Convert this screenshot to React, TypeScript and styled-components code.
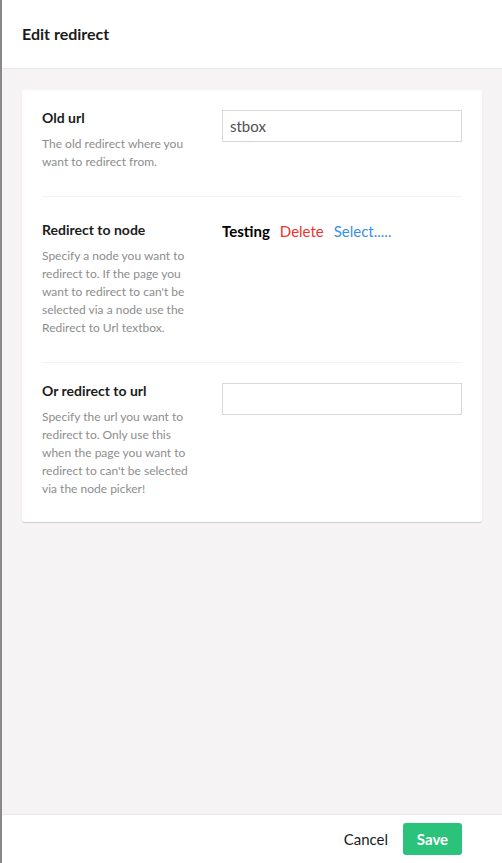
import React from "react";
import styled, { createGlobalStyle } from "styled-components";

const GlobalStyle = createGlobalStyle`
  html, body { margin: 0; padding: 0; height: 100%; }
  body { font-family: Lato, "Open Sans", sans-serif; background: #ffffff; }
  #root { height: 100%; }
  * { box-sizing: border-box; }
`;

const Shell = styled.div`
  display: flex;
  height: 863px;
  width: 502px;
`;

const BackdropStrip = styled.div`
  width: 2px;
  flex: none;
  background: #8a8989;
`;

const Panel = styled.div`
  flex: 1;
  display: flex;
  flex-direction: column;
  min-width: 0;
  background: #f5f3f3;
`;

const Header = styled.header`
  height: 69px;
  flex: none;
  display: flex;
  align-items: center;
  padding: 0 20px 1px;
  background: #ffffff;
  border-bottom: 1px solid #e9e9eb;
`;

const Title = styled.h1`
  margin: 0;
  font-size: 16px;
  font-weight: 700;
  color: #1b1b1b;
`;

const Body = styled.main`
  flex: 1;
  padding: 21px 20px;
`;

const Card = styled.section`
  background: #ffffff;
  border-radius: 3px;
  box-shadow: 0 1px 1px rgba(0, 0, 0, 0.16);
  padding: 0 20px;
`;

const Row = styled.div<{ $last?: boolean }>`
  display: flex;
  padding: 20px 0 ${(p) => (p.$last ? "24px" : "25px")};
  border-bottom: ${(p) => (p.$last ? "none" : "1px solid #f3f3f5")};
`;

const LabelCol = styled.div<{ $offset?: number }>`
  width: 160px;
  flex: none;
  margin-right: 20px;
  padding-top: ${(p) => p.$offset ?? 0}px;
`;

const Label = styled.div`
  font-size: 14px;
  font-weight: 700;
  line-height: 16px;
  color: #1b1b1b;
`;

const Description = styled.div`
  margin-top: 9px;
  font-size: 12px;
  line-height: 18px;
  color: #8d8d8d;
`;

const Controls = styled.div`
  flex: 1;
  min-width: 0;
`;

const TextInput = styled.input`
  display: block;
  width: 100%;
  height: 32px;
  padding: 0 7px;
  border: 1px solid #d8d7d9;
  border-radius: 0;
  font-family: Lato, "Open Sans", sans-serif;
  font-size: 15px;
  color: #515054;
  background: #ffffff;
  outline: none;
`;

const NodePicker = styled.div`
  display: flex;
  align-items: center;
  gap: 10px;
  margin-top: 5px;
  font-size: 15px;
  line-height: 18px;
`;

const NodeName = styled.span`
  font-weight: 700;
  color: #000000;
`;

const LinkAction = styled.span<{ $tone: "danger" | "info" }>`
  color: ${(p) => (p.$tone === "danger" ? "#f2312b" : "#3a8eeb")};
  cursor: pointer;
`;

const Footer = styled.footer`
  height: 49px;
  flex: none;
  display: flex;
  align-items: center;
  justify-content: flex-end;
  gap: 15px;
  padding: 0 40px 0 20px;
  background: #ffffff;
  border-top: 1px solid #e9e9eb;
`;

const CancelButton = styled.button`
  border: none;
  background: none;
  padding: 0;
  font-family: Lato, "Open Sans", sans-serif;
  font-size: 15px;
  color: #1b1b1b;
  cursor: pointer;
`;

const SaveButton = styled.button`
  height: 32px;
  width: 59px;
  border: none;
  border-radius: 3px;
  background: #2bc37c;
  color: #ffffff;
  font-family: Lato, "Open Sans", sans-serif;
  font-size: 15px;
  font-weight: 700;
  cursor: pointer;
`;

export default function App() {
  return (
    <>
      <GlobalStyle />
      <Shell>
        <BackdropStrip />
        <Panel>
          <Header>
            <Title>Edit redirect</Title>
          </Header>
          <Body>
            <Card>
              <Row>
                <LabelCol>
                  <Label>Old url</Label>
                  <Description>The old redirect where you want to redirect from.</Description>
                </LabelCol>
                <Controls>
                  <TextInput defaultValue="stbox" />
                </Controls>
              </Row>
              <Row>
                <LabelCol $offset={5}>
                  <Label>Redirect to node</Label>
                  <Description>
                    Specify a node you want to redirect to. If the page you want to redirect to can't be
                    selected via a node use the Redirect to Url textbox.
                  </Description>
                </LabelCol>
                <Controls>
                  <NodePicker>
                    <NodeName>Testing</NodeName>
                    <LinkAction $tone="danger">Delete</LinkAction>
                    <LinkAction $tone="info">Select.....</LinkAction>
                  </NodePicker>
                </Controls>
              </Row>
              <Row $last>
                <LabelCol>
                  <Label>Or redirect to url</Label>
                  <Description>
                    Specify the url you want to redirect to. Only use this when the page you want to
                    redirect to can't be selected via the node picker!
                  </Description>
                </LabelCol>
                <Controls>
                  <TextInput defaultValue="" />
                </Controls>
              </Row>
            </Card>
          </Body>
          <Footer>
            <CancelButton>Cancel</CancelButton>
            <SaveButton>Save</SaveButton>
          </Footer>
        </Panel>
      </Shell>
    </>
  );
}
